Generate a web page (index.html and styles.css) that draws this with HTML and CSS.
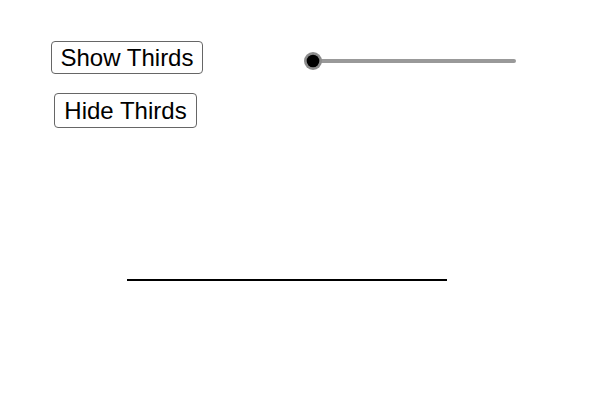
FILE: index.html
```html
<!DOCTYPE html>
<html>
<head>
<meta charset="utf-8">
<link rel="stylesheet" href="styles.css">
</head>
<body>
<main class="canvas">
  <div class="row">
    <button class="btn btn-show">Show Thirds</button>
    <svg class="slider" width="222" height="22" viewBox="0 0 222 22">
      <line x1="11" y1="11" x2="212" y2="11" stroke="#999999" stroke-width="4" stroke-linecap="round"/>
      <circle cx="11" cy="11" r="9" fill="#8c8c8c"/>
      <circle cx="11" cy="11" r="6.3" fill="#000000"/>
    </svg>
  </div>
  <button class="btn btn-hide">Hide Thirds</button>
  <div class="segment"></div>
</main>
</body>
</html>
```
FILE: styles.css
```css
html, body {
  margin: 0;
  padding: 0;
  background: #ffffff;
}
.canvas {
  width: 598px;
  height: 402px;
  overflow: hidden;
  padding-top: 41px;
  box-sizing: border-box;
  font-family: "Liberation Sans", Arial, sans-serif;
}
.row {
  display: flex;
  align-items: flex-start;
}
.btn {
  display: flex;
  align-items: center;
  justify-content: center;
  box-sizing: border-box;
  padding: 0;
  background: #ffffff;
  border: 1px solid #666666;
  border-radius: 4px;
  font-family: "Liberation Sans", Arial, sans-serif;
  font-size: 24px;
  color: #000000;
}
.btn-show {
  margin-left: 51px;
  width: 152px;
  height: 33px;
}
.slider {
  display: block;
  margin-left: 99px;
  margin-top: 9px;
}
.btn-hide {
  margin-left: 54px;
  margin-top: 19px;
  width: 143px;
  height: 35px;
}
.segment {
  margin-left: 127px;
  margin-top: 151px;
  width: 320px;
  height: 2px;
  background: #000000;
}
```
